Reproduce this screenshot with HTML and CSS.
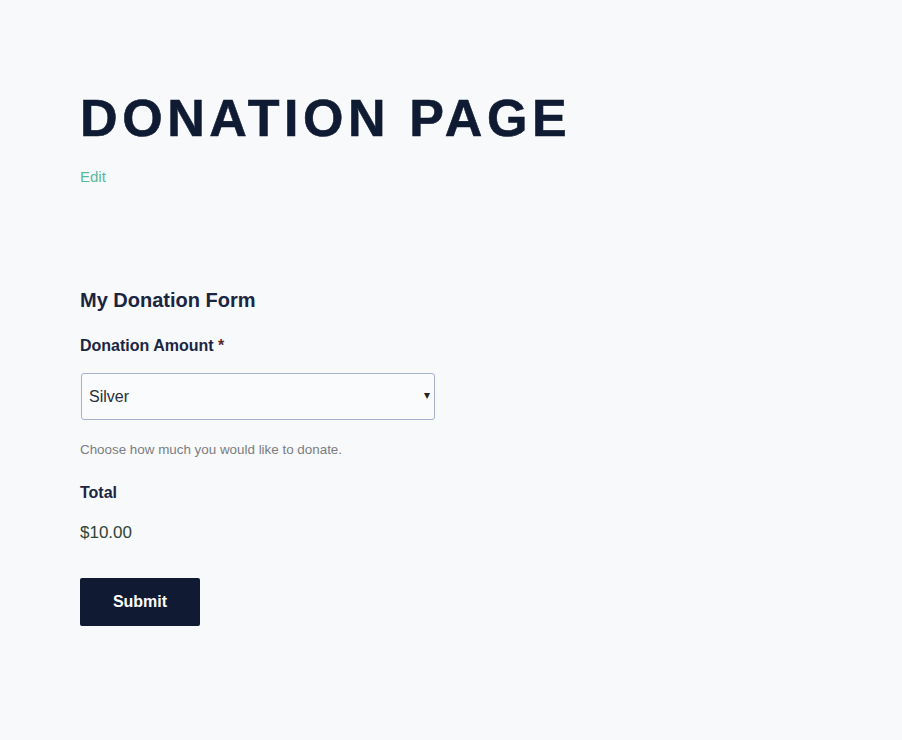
FILE: index.html
```html
<!DOCTYPE html>
<html lang="en">
<head>
  <meta charset="UTF-8">
  <meta name="viewport" content="width=device-width, initial-scale=1.0">
  <title>Donation Page</title>
  <link rel="stylesheet" href="styles.css">
</head>
<body>
  <main class="page">
    <header class="page-header">
      <h1 class="page-title">Donation Page</h1>
      <a href="#" class="edit-link">Edit</a>
    </header>

    <form class="donation-form">
      <h2 class="form-title">My Donation Form</h2>

      <div class="field">
        <label class="field-label" for="amount">Donation Amount <span class="required">*</span></label>
        <div class="select-wrap">
          <select id="amount" class="field-select">
            <option>Bronze</option>
            <option selected>Silver</option>
            <option>Gold</option>
          </select>
          <span class="select-arrow">&#9662;</span>
        </div>
        <p class="field-help">Choose how much you would like to donate.</p>
      </div>

      <div class="field field-total">
        <div class="field-label">Total</div>
        <div class="total">$10.00</div>
      </div>

      <button type="button" class="submit-btn">Submit</button>
    </form>
  </main>
</body>
</html>
```

FILE: styles.css
```css
* {
  margin: 0;
  padding: 0;
  box-sizing: border-box;
}

body {
  background: #f8f9fa;
  font-family: 'Liberation Sans', Arial, sans-serif;
  color: #141d38;
}

.page {
  padding: 92px 80px 0;
}

.page-title {
  font-family: 'Liberation Sans', Arial, sans-serif;
  font-size: 52px;
  font-weight: bold;
  text-transform: uppercase;
  letter-spacing: 4.6px;
  line-height: 52px;
  color: #0f1a33;
  -webkit-text-stroke: 0.6px #0f1a33;
}

.edit-link {
  display: inline-block;
  margin-top: 24px;
  font-size: 15px;
  color: #54b99b;
  text-decoration: none;
}

.donation-form {
  margin-top: 102px;
}

.form-title {
  font-size: 20px;
  font-weight: bold;
  line-height: 24px;
  color: #1b2542;
}

.field {
  margin-top: 24px;
}

.field-label {
  display: block;
  font-size: 16px;
  font-weight: bold;
  line-height: 20px;
  color: #1b2542;
}

.required {
  color: #5a2a2a;
}

.select-wrap {
  position: relative;
  width: 354px;
  margin: 17px 0 0 1px;
}

.field-select {
  width: 100%;
  height: 47px;
  padding: 0 24px 0 7px;
  appearance: none;
  -webkit-appearance: none;
  background: #fafbfc;
  border: 1px solid #a3b1cc;
  border-radius: 3px;
  font-family: 'Liberation Sans', Arial, sans-serif;
  font-size: 16px;
  color: #2a2f3a;
  outline: none;
}

.select-arrow {
  position: absolute;
  right: 5px;
  top: 15px;
  font-size: 12px;
  color: #222;
  pointer-events: none;
}

.field-help {
  margin-top: 22px;
  font-size: 13.4px;
  color: #7a7d83;
}

.field-total {
  margin-top: 26px;
}

.total {
  margin-top: 20px;
  font-size: 17px;
  color: #2f4536;
}

.submit-btn {
  display: block;
  margin-top: 35px;
  width: 120px;
  height: 48px;
  background: #101a33;
  color: #ffffff;
  border: none;
  border-radius: 2px;
  font-family: 'Liberation Sans', Arial, sans-serif;
  font-size: 16px;
  font-weight: bold;
  cursor: pointer;
}
```
